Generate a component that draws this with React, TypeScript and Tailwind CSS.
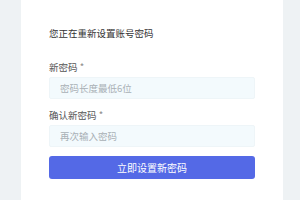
export default function App() {
  return (
    <div
      className="min-h-[200px] bg-[#eef2f4] pl-[21px]"
      style={{ fontFamily: '"Noto Sans CJK SC", "Noto Sans", sans-serif' }}
    >
      <div className="w-[262px] min-h-[200px] bg-white px-[28px] pt-[27px]">
        <p className="text-[9.5px] leading-[12px] text-[#333]">您正在重新设置账号密码</p>

        <div className="mt-[22px]">
          <label className="block text-[9.5px] leading-[12px] text-[#555]">
            新密码 <span className="text-[#888]">*</span>
          </label>
          <input
            type="password"
            placeholder="密码长度最低6位"
            className="mt-[4px] block h-[22px] w-full rounded-[2px] border border-[#eef5f8] bg-[#f3fafd] px-[10px] text-[9.5px] outline-none placeholder:text-[#a9b0b5]"
          />
        </div>

        <div className="mt-[10px]">
          <label className="block text-[9.5px] leading-[12px] text-[#555]">
            确认新密码 <span className="text-[#888]">*</span>
          </label>
          <input
            type="password"
            placeholder="再次输入密码"
            className="mt-[4px] block h-[22px] w-full rounded-[2px] border border-[#eef5f8] bg-[#f3fafd] px-[10px] text-[9.5px] outline-none placeholder:text-[#a9b0b5]"
          />
        </div>

        <button className="mt-[9px] flex h-[23px] w-full items-center justify-center rounded-[3px] bg-[#5469e6] text-[10px] text-white">
          立即设置新密码
        </button>
      </div>
    </div>
  );
}
